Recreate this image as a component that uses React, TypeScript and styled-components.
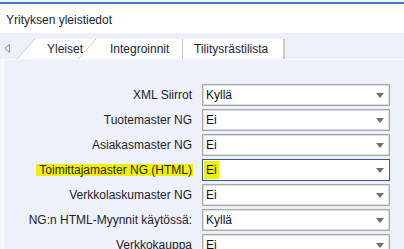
import React from "react";
import styled, { createGlobalStyle, css } from "styled-components";

const GlobalStyle = createGlobalStyle`
  html, body { margin: 0; padding: 0; background: #f4f5f9; }
  body { font-family: "Liberation Sans", Arial, sans-serif; font-size: 12px; color: #1e1e28; }
  * { box-sizing: border-box; }
`;

const Window = styled.div`
  width: 404px;
  height: 249px;
  overflow: hidden;
  display: flex;
  flex-direction: column;
  background: #f4f5f9;
`;

const TopStrip = styled.div`
  height: 4px;
  background: #f0f0f0;
  border-bottom: 2px solid #3d7dc4;
  flex: none;
`;

const TitleBar = styled.div`
  height: 29px;
  flex: none;
  background: #ffffff;
  display: flex;
  align-items: center;
  padding-left: 6px;
  padding-top: 2px;
  font-size: 12px;
  color: #1e1e28;
`;

const TabBar = styled.div`
  height: 26px;
  flex: none;
  background: #edf0f8;
  display: flex;
  align-items: flex-end;
`;

const ScrollArrow = styled.div`
  width: 17px;
  height: 20px;
  display: flex;
  align-items: center;
  padding-left: 4px;
  margin-bottom: 1px;
`;

const Tab = styled.div<{ $w: number; $pl: number; $slant?: boolean; $edge?: boolean; $ml?: number }>`
  position: relative;
  height: 20px;
  width: ${(p) => p.$w}px;
  margin-left: ${(p) => p.$ml ?? 0}px;
  padding-left: ${(p) => p.$pl}px;
  background: #ffffff;
  display: flex;
  align-items: center;
  font-size: 12px;
  color: #1e1e30;
  white-space: nowrap;
  ${(p) =>
    p.$slant &&
    css`
      &::before {
        content: "";
        position: absolute;
        left: -18px;
        top: 0;
        width: 18px;
        height: 20px;
        background: linear-gradient(
          to top left,
          #ffffff calc(50% - 0.6px),
          #c4c4c8 50%,
          transparent calc(50% + 0.6px)
        );
      }
    `}
  ${(p) =>
    p.$edge &&
    css`
      border-left: 1px solid #c8c8cc;
      border-right: 2px solid #c8c8cc;
    `}
`;

const Body = styled.div`
  flex: 1;
  display: flex;
  min-height: 0;
`;

const Gutter = styled.div`
  width: 3px;
  flex: none;
  background: #f6f7fb;
`;

const Panel = styled.div`
  flex: 1;
  background: #eef1f9;
  border-left: 1px solid #ffffff;
  border-top: 1px solid #f8f9fc;
  padding-top: 24px;
`;

const Form = styled.div`
  display: grid;
  grid-template-columns: 189px 188px;
  column-gap: 9px;
  row-gap: 3px;
  grid-auto-rows: 22px;
`;

const Label = styled.div`
  display: flex;
  align-items: center;
  justify-content: flex-end;
  white-space: nowrap;
  font-size: 12px;
  color: #1e1e28;
`;

const LabelText = styled.span<{ $highlight?: boolean }>`
  line-height: 12px;
  padding: 0 1px 0 3px;
  ${(p) => p.$highlight && css`background: #f0f000;`}
`;

const SelectBox = styled.div<{ $focused?: boolean }>`
  display: flex;
  align-items: stretch;
  height: 22px;
  background: #ffffff;
  border: 1px solid ${(p) => (p.$focused ? "#3a55a4" : "#a9a9ad")};
  box-shadow: ${(p) => (p.$focused ? "none" : "inset 0 0 0 1px #dcdcdf")};
  padding: 1px 5px 1px 1px;
`;

const Value = styled.span<{ $marked?: boolean }>`
  display: flex;
  align-items: center;
  padding: 0 2px 0 2px;
  font-size: 12px;
  color: #101018;
  ${(p) => p.$marked && css`background: #f0f000;`}
`;

const Caret = styled.svg`
  margin-left: auto;
  align-self: center;
`;

type Row = { label: string; value: string; highlight?: boolean };

const rows: Row[] = [
  { label: "XML Siirrot", value: "Kyllä" },
  { label: "Tuotemaster NG", value: "Ei" },
  { label: "Asiakasmaster NG", value: "Ei" },
  { label: "Toimittajamaster NG (HTML)", value: "Ei", highlight: true },
  { label: "Verkkolaskumaster NG", value: "Ei" },
  { label: "NG:n HTML-Myynnit käytössä:", value: "Kyllä" },
  { label: "Verkkokauppa", value: "Ei" },
];

export default function App() {
  return (
    <>
      <GlobalStyle />
      <Window>
        <TopStrip />
        <TitleBar>Yrityksen yleistiedot</TitleBar>
        <TabBar>
          <ScrollArrow>
            <svg width="6" height="9" viewBox="0 0 6 9">
              <path d="M5.5 0.5 L0.8 4.5 L5.5 8.5 Z" fill="none" stroke="#8a8a8e" strokeWidth="1" />
            </svg>
          </ScrollArrow>
          <Tab $slant $ml={18} $w={61} $pl={12}>Yleiset</Tab>
          <Tab $slant $w={86} $pl={14}>Integroinnit</Tab>
          <Tab $edge $w={103} $pl={11}>Tilitysrästilista</Tab>
        </TabBar>
        <Body>
          <Gutter />
          <Panel>
            <Form>
              {rows.map((r) => (
                <React.Fragment key={r.label}>
                  <Label>
                    <LabelText $highlight={r.highlight}>{r.label}</LabelText>
                  </Label>
                  <SelectBox $focused={r.highlight}>
                    <Value $marked={r.highlight}>{r.value}</Value>
                    <Caret width="8" height="5" viewBox="0 0 8 5">
                      <path d="M0 0 H8 L4 5 Z" fill="#707074" />
                    </Caret>
                  </SelectBox>
                </React.Fragment>
              ))}
            </Form>
          </Panel>
        </Body>
      </Window>
    </>
  );
}
